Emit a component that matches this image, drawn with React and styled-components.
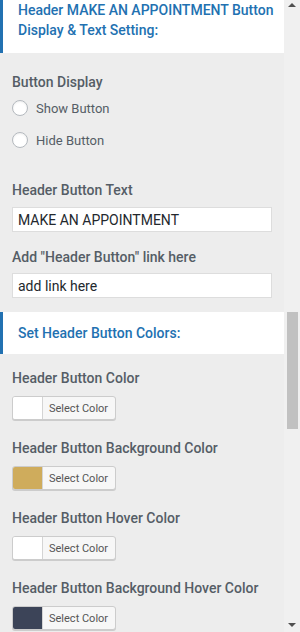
import React from "react";
import styled, { createGlobalStyle } from "styled-components";

const Global = createGlobalStyle`
  html, body {
    margin: 0;
    padding: 0;
    height: 632px;
    overflow: hidden;
    background: #ededed;
  }
  * { box-sizing: border-box; }
`;

const Frame = styled.div`
  display: flex;
  width: 300px;
  height: 632px;
  font-family: Roboto, "Liberation Sans", sans-serif;
`;

const Panel = styled.div`
  width: 284px;
  background: #ededed;
  overflow: hidden;
`;

const SectionHead = styled.div`
  background: #fff;
  border-left: 3px solid #2271b1;
  padding: ${(p) => p.$pad};
  color: #2271b1;
  font-size: 14px;
  font-weight: 500;
  line-height: 20px;
  margin-top: ${(p) => p.$top || 0}px;
`;

const Group = styled.div`
  padding: ${(p) => p.$pad || "0 12px"};
`;

const Label = styled.div`
  color: #555d66;
  font-size: 14px;
  font-weight: 500;
  line-height: 18px;
  margin-top: ${(p) => p.$top || 0}px;
`;

const RadioRow = styled.label`
  display: flex;
  align-items: center;
  gap: 8px;
  height: 24px;
  margin-top: ${(p) => p.$top || 0}px;
  color: #555d66;
  font-size: 13px;
`;

const Radio = styled.span`
  width: 16px;
  height: 16px;
  border-radius: 50%;
  border: 1px solid #b4b9be;
  background: #fff;
  box-shadow: inset 0 1px 2px rgba(0, 0, 0, 0.07);
`;

const TextInput = styled.div`
  height: 25px;
  width: 260px;
  margin-top: ${(p) => p.$top || 0}px;
  background: #fff;
  border: 1px solid #dddddd;
  padding: 0 5px;
  display: flex;
  align-items: center;
  color: #23282d;
  font-size: 14px;
`;

const ColorButton = styled.div`
  display: flex;
  width: 104px;
  height: 24px;
  margin-top: 9px;
  border: 1px solid #cccccc;
  border-radius: 3px;
  box-shadow: 0 1px 0 #cccccc;
  overflow: hidden;
  background: #f7f7f7;
`;

const Swatch = styled.span`
  width: 30px;
  background: ${(p) => p.$color};
  border-right: 1px solid #d4d4d4;
`;

const SwatchText = styled.span`
  flex: 1;
  display: flex;
  align-items: center;
  padding-left: 6px;
  color: #555;
  font-size: 11px;
`;

const ColorField = styled.div`
  margin-bottom: 19px;
`;

const Track = styled.div`
  width: 16px;
  background: #f0f0f0;
  display: flex;
  flex-direction: column;
  align-items: center;
`;

const Arrow = styled.span`
  width: 0;
  height: 0;
  border-left: 4px solid transparent;
  border-right: 4px solid transparent;
  ${(p) =>
    p.$down
      ? "border-top: 4px solid #505050; margin-top: auto; margin-bottom: 5px;"
      : "border-bottom: 4px solid #505050; margin-top: 3px;"}
`;

const Thumb = styled.span`
  width: 11px;
  height: 117px;
  margin-top: 305px;
  background: #c1c1c1;
`;

const colors = [
  { label: "Header Button Color", color: "#ffffff" },
  { label: "Header Button Background Color", color: "#cfac5c" },
  { label: "Header Button Hover Color", color: "#ffffff" },
  { label: "Header Button Background Hover Color", color: "#3c4458" },
];

export default function App() {
  return (
    <Frame>
      <Global />
      <Panel>
        <SectionHead $pad="0 10px 13px 15px">
          Header MAKE AN APPOINTMENT Button Display &amp; Text Setting:
        </SectionHead>
        <Group $pad="20px 12px 0">
          <Label>Button Display</Label>
          <RadioRow $top={5}>
            <Radio />
            Show Button
          </RadioRow>
          <RadioRow $top={8}>
            <Radio />
            Hide Button
          </RadioRow>
          <Label $top={29}>Header Button Text</Label>
          <TextInput $top={8}>MAKE AN APPOINTMENT</TextInput>
          <Label $top={16}>Add "Header Button" link here</Label>
          <TextInput $top={7}>add link here</TextInput>
        </Group>
        <SectionHead $pad="11px 12px 11px 15px" $top={14}>
          Set Header Button Colors:
        </SectionHead>
        <Group $pad="15px 12px 0">
          {colors.map((c) => (
            <ColorField key={c.label}>
              <Label>{c.label}</Label>
              <ColorButton>
                <Swatch $color={c.color} />
                <SwatchText>Select Color</SwatchText>
              </ColorButton>
            </ColorField>
          ))}
        </Group>
      </Panel>
      <Track>
        <Arrow />
        <Thumb />
        <Arrow $down />
      </Track>
    </Frame>
  );
}
